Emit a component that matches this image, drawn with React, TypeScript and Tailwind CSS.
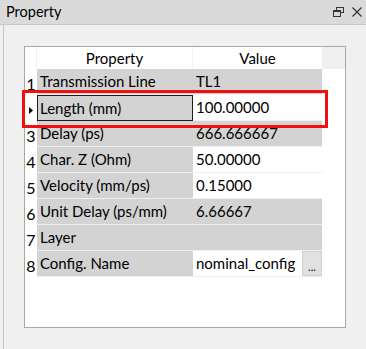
import React from "react";

type Row = { n: string; name: string; value: string; shaded: boolean };

const rows: Row[] = [
  { n: "1", name: "Transmission Line", value: "TL1", shaded: true },
  { n: "", name: "Length (mm)", value: "100.00000", shaded: false },
  { n: "3", name: "Delay (ps)", value: "666.666667", shaded: true },
  { n: "4", name: "Char. Z (Ohm)", value: "50.00000", shaded: false },
  { n: "5", name: "Velocity (mm/ps)", value: "0.15000", shaded: false },
  { n: "6", name: "Unit Delay (ps/mm)", value: "6.66667", shaded: true },
  { n: "7", name: "Layer", value: "", shaded: true },
  { n: "8", name: "Config. Name", value: "nominal_config", shaded: false },
];

export default function App() {
  return (
    <div
      className="relative w-[366px] h-[349px] bg-[#f0f0f0] flex flex-col text-[#000] overflow-hidden"
      style={{ fontFamily: 'Lato, "Open Sans", sans-serif' }}
    >
      {/* --- Title bar --- */}
      <div className="h-[25px] bg-[#dadada] border-b border-[#c8c8c8] flex items-center pl-[6px] pr-[4px]">
        <span className="text-[14.5px] leading-none">Property</span>
        <div className="ml-auto flex items-center gap-[8px]">
          <svg width="11" height="10" viewBox="0 0 11 10" className="text-[#333]">
            <rect x="3.5" y="0.5" width="7" height="5" fill="none" stroke="currentColor" />
            <rect x="0.5" y="3.5" width="7" height="6" fill="#dadada" stroke="currentColor" />
            <line x1="1" y1="4.5" x2="7" y2="4.5" stroke="currentColor" />
          </svg>
          <svg width="10" height="10" viewBox="0 0 10 10" className="text-[#333]">
            <path d="M0.5 0.5 L9.5 9.5 M9.5 0.5 L0.5 9.5" stroke="currentColor" strokeWidth="1.2" />
          </svg>
        </div>
      </div>

      {/* --- Body --- */}
      <div className="flex-1 ml-[3px] border-l border-[#c4c4c4] pl-[20px] pt-[21px] pr-[20px] pb-[20px] flex">
        <div className="w-[322px] h-[282px] border border-[#a8a8a8] bg-white flex flex-col">
          {/* header */}
          <div className="flex h-[22px] text-[15px]">
            <div className="w-[12px] border-r border-[#f0f0f0]" />
            <div className="w-[156px] border-r border-[#f0f0f0] flex items-center justify-center">
              Property
            </div>
            <div className="w-[129px] flex items-center justify-center">Value</div>
            <div className="flex-1 bg-[#f0f0f0]" />
          </div>

          {rows.map((r, i) => (
            <div key={i} className="flex h-[26px] text-[15px]">
              <div className="w-[12px] flex items-center justify-center pt-[4px]">
                {r.n ? (
                  <span className="leading-none text-[16px]">{r.n}</span>
                ) : (
                  <svg width="4" height="7" viewBox="0 0 4 7">
                    <path d="M0 0 L4 3.5 L0 7 Z" fill="#000" />
                  </svg>
                )}
              </div>
              <div
                className={
                  i === 1
                    ? "w-[156px] bg-[#d3d3d3] border border-[#1e1e1e] flex items-center pl-[2px]"
                    : "w-[156px] bg-[#d3d3d3] border-b border-[#f0f0f0] flex items-center pl-[3px]"
                }
              >
                {r.name}
              </div>
              <div
                className={
                  (r.shaded ? "bg-[#d3d3d3] " : "bg-white ") +
                  "w-[129px] border-b border-[#f0f0f0] flex items-center pl-[3px]"
                }
              >
                <span className="flex-1">{r.value}</span>
                {i === 7 && (
                  <div className="w-[20px] h-[25px] bg-[#e1e1e1] border border-[#cfcfcf] flex items-end justify-center pb-[3px] text-[11px] leading-none">
                    ...
                  </div>
                )}
              </div>
              <div className="flex-1" />
            </div>
          ))}
        </div>
      </div>

      {/* --- Highlight annotation --- */}
      <div className="absolute left-[22px] top-[90px] w-[306px] h-[38px] border-[3px] border-[#f01010]" />
    </div>
  );
}
